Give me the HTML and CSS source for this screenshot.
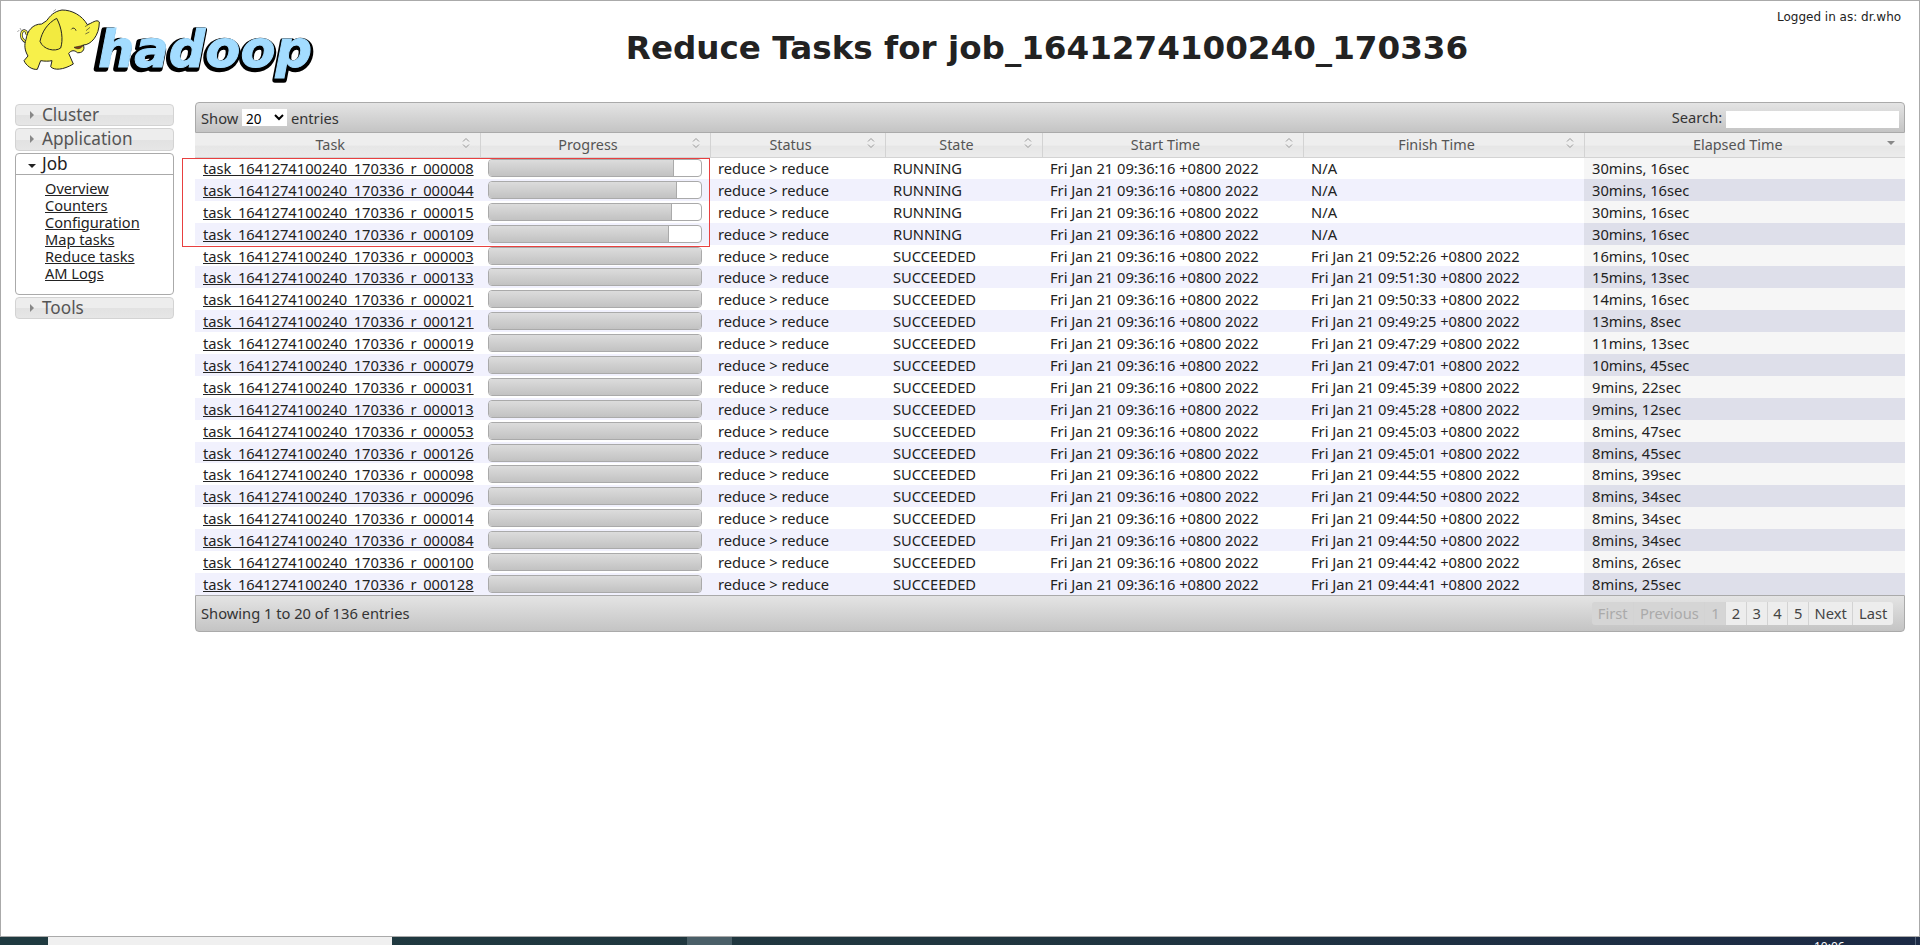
FILE: index.html
```html
<!DOCTYPE html>
<html lang="en">
<head>
	<meta charset="UTF-8">
	<title>Reduce Tasks for job_1641274100240_170336</title>
	<link rel="stylesheet" href="styles.css">
</head>
<body>
	<div class="page">
		<div class="header">
			<svg class="logo" viewBox="0 0 1020 300" width="340" height="100">
				<!-- wordmark -->
				<text class="logo-shadow" x="284" y="207" textLength="654" lengthAdjust="spacingAndGlyphs">hadoop</text>
				<text class="logo-word" x="294" y="202" textLength="642" lengthAdjust="spacingAndGlyphs">hadoop</text>
				<!-- tail -->
				<path d="M82,128 C66,122 60,108 66,96 C72,88 84,94 78,104" fill="none" stroke="#222" stroke-width="8"/>
				<path d="M82,128 C66,122 60,108 66,96 C72,88 84,94 78,104" fill="none" stroke="#f7f04a" stroke-width="4"/>
				<path d="M52,96 L58,90 M60,84 L64,92" stroke="#777" stroke-width="2"/>
				<!-- body -->
				<path d="M125,72 C98,72 82,92 78,118 C72,135 74,152 84,168 L72,182 C78,196 95,210 112,208 L122,182 C135,184 146,184 156,182 L152,200 C162,212 190,210 220,192 L206,160 C214,150 224,150 232,158 C246,160 256,150 250,135 C272,135 298,108 298,66 C290,56 276,70 262,74 C246,46 216,30 186,30 C162,34 150,48 140,62 Z" fill="#f7f04a" stroke="#222" stroke-width="3"/>
				<!-- ear -->
				<path d="M170,55 C142,70 126,95 120,124 C130,150 166,156 182,144 C190,120 186,84 170,55 Z" fill="#f2ea40" stroke="#222" stroke-width="3"/>
				<!-- face -->
				<path d="M214,88 C218,82 226,84 228,92" fill="none" stroke="#222" stroke-width="3"/>
				<path d="M222,142 C232,150 244,146 250,135 C238,140 228,140 222,142 Z" fill="#8a3a10" stroke="#222" stroke-width="2"/>
				<path d="M255,80 L268,72 M258,92 L270,82 M256,102 L268,96" stroke="#333" stroke-width="2"/>
				<path d="M160,34 L168,28" stroke="#777" stroke-width="2"/>
			</svg>
			<h1 class="title">Reduce Tasks for job_1641274100240_170336</h1>
			<div class="user">Logged in as: dr.who</div>
		</div>

		<div class="main">
			<div class="nav">
				<div class="nav-head"><span class="arrow-right"></span>Cluster</div>
				<div class="nav-head"><span class="arrow-right"></span>Application</div>
				<div class="nav-open">
					<div class="nav-head-open"><span class="arrow-down"></span>Job</div>
					<ul class="nav-links">
						<li><a href="#">Overview</a></li>
						<li><a href="#">Counters</a></li>
						<li><a href="#">Configuration</a></li>
						<li><a href="#">Map tasks</a></li>
						<li><a href="#">Reduce tasks</a></li>
						<li><a href="#">AM Logs</a></li>
					</ul>
				</div>
				<div class="nav-head"><span class="arrow-right"></span>Tools</div>
			</div>

			<div class="grid-wrap">
				<div class="toolbar">
					<label class="show">Show
						<select class="entries"><option>20</option><option>50</option><option>100</option></select>
						entries</label>
					<label class="search">Search: <input type="text" class="search-box"></label>
				</div>
				<table class="tasks">
					<colgroup>
						<col class="c-task"><col class="c-progress"><col class="c-status"><col class="c-state"><col class="c-start"><col class="c-finish"><col class="c-elapsed">
					</colgroup>
					<thead>
						<tr>
							<th><div class="th-in"><span>Task</span><svg class="sort" viewBox="0 0 8 12"><path d="M1 4.5 L4 1.5 L7 4.5 M1 7.5 L4 10.5 L7 7.5"/></svg></div></th>
							<th><div class="th-in"><span>Progress</span><svg class="sort" viewBox="0 0 8 12"><path d="M1 4.5 L4 1.5 L7 4.5 M1 7.5 L4 10.5 L7 7.5"/></svg></div></th>
							<th><div class="th-in"><span>Status</span><svg class="sort" viewBox="0 0 8 12"><path d="M1 4.5 L4 1.5 L7 4.5 M1 7.5 L4 10.5 L7 7.5"/></svg></div></th>
							<th><div class="th-in"><span>State</span><svg class="sort" viewBox="0 0 8 12"><path d="M1 4.5 L4 1.5 L7 4.5 M1 7.5 L4 10.5 L7 7.5"/></svg></div></th>
							<th><div class="th-in"><span>Start Time</span><svg class="sort" viewBox="0 0 8 12"><path d="M1 4.5 L4 1.5 L7 4.5 M1 7.5 L4 10.5 L7 7.5"/></svg></div></th>
							<th><div class="th-in"><span>Finish Time</span><svg class="sort" viewBox="0 0 8 12"><path d="M1 4.5 L4 1.5 L7 4.5 M1 7.5 L4 10.5 L7 7.5"/></svg></div></th>
							<th><div class="th-in"><span>Elapsed Time</span><i class="sort-desc"></i></div></th>
						</tr>
					</thead>
					<tbody id="rows"></tbody>
				</table>
				<div class="red-box"></div>
				<div class="footer">
					<span>Showing 1 to 20 of 136 entries</span>
					<div class="pager">
						<a class="off">First</a><a class="off">Previous</a><a class="off">1</a><a>2</a><a>3</a><a>4</a><a>5</a><a>Next</a><a>Last</a>
					</div>
				</div>
			</div>
		</div>
	</div>
	<div class="taskbar">
		<div class="tb-tab"></div>
		<div class="tb-active"></div>
		<div class="tb-clock">10:06</div>
		<div class="tb-desk"></div>
	</div>

	<script type="text/javascript">
	var data=[
		["000008",87.4,"","30mins, 16sec"],
		["000044",88.9,"","30mins, 16sec"],
		["000015",86.1,"","30mins, 16sec"],
		["000109",85,"","30mins, 16sec"],
		["000003",100,"09:52:26","16mins, 10sec"],
		["000133",100,"09:51:30","15mins, 13sec"],
		["000021",100,"09:50:33","14mins, 16sec"],
		["000121",100,"09:49:25","13mins, 8sec"],
		["000019",100,"09:47:29","11mins, 13sec"],
		["000079",100,"09:47:01","10mins, 45sec"],
		["000031",100,"09:45:39","9mins, 22sec"],
		["000013",100,"09:45:28","9mins, 12sec"],
		["000053",100,"09:45:03","8mins, 47sec"],
		["000126",100,"09:45:01","8mins, 45sec"],
		["000098",100,"09:44:55","8mins, 39sec"],
		["000096",100,"09:44:50","8mins, 34sec"],
		["000014",100,"09:44:50","8mins, 34sec"],
		["000084",100,"09:44:50","8mins, 34sec"],
		["000100",100,"09:44:42","8mins, 26sec"],
		["000128",100,"09:44:41","8mins, 25sec"]
	];
	var html="";
	for(var i=0;i<data.length;i++){
		var d=data[i];
		var running=d[2]=="";
		html+='<tr class="'+(i%2?"even":"odd")+'">'
			+'<td><a href="#">task_1641274100240_170336_r_'+d[0]+'</a></td>'
			+'<td><div class="bar"><div class="'+(running?"fill fill-part":"fill")+'" style="width:'+d[1]+'%"></div></div></td>'
			+'<td>reduce &gt; reduce</td>'
			+'<td>'+(running?"RUNNING":"SUCCEEDED")+'</td>'
			+'<td>Fri Jan 21 09:36:16 +0800 2022</td>'
			+'<td>'+(running?"N/A":"Fri Jan 21 "+d[2]+" +0800 2022")+'</td>'
			+'<td class="sorted">'+d[3]+'</td></tr>';
	}
	document.getElementById("rows").innerHTML=html;
	</script>
</body>
</html>
```

FILE: styles.css
```css
html,body{
	margin: 0;
	height: 100%;
	overflow: hidden;
	background: #fff;
}
body{
	font-family: "Noto Sans", "Open Sans", sans-serif;
	font-size: 14.7px;
	color: #222;
}
.page{
	height: 937px;
	box-sizing: border-box;
	border: 1px solid #aaa;
}
.header{
	display: flex;
	height: 101px;
}
.logo{
	flex: none;
	margin-left: -1px;
	margin-top: -1px;
}
.logo-word,.logo-shadow{
	font-family: "DejaVu Sans", sans-serif;
	font-weight: bold;
	font-style: italic;
	font-size: 156px;
}
.logo-word{
	fill: #a3dcff;
	stroke: #a3dcff;
	stroke-width: 3;
}
.logo-shadow{
	fill: #000;
	stroke: #000;
	stroke-width: 16;
	stroke-linejoin: round;
}
.title{
	flex: 1;
	margin: 25px 0 0 -23px;
	text-align: center;
	font-family: "DejaVu Sans", sans-serif;
	font-size: 32.6px;
	line-height: 44px;
	color: #222;
}
.user{
	flex: none;
	width: 142px;
	padding-top: 8px;
	font-size: 12px;
	font-family: "DejaVu Sans", sans-serif;
	line-height: 16px;
}
.main{
	display: flex;
	align-items: flex-start;
	padding-left: 14px;
}
.nav{
	flex: none;
	width: 159px;
	margin-top: 2px;
	display: flex;
	flex-direction: column;
	gap: 2px;
	color: #555;
	font-size: 17.2px;
}
.nav-head{
	height: 22.4px;
	line-height: 20px;
	box-sizing: border-box;
	border: 1px solid #d3d3d3;
	border-radius: 4px;
	background: linear-gradient(#ededed 0%, #ededed 50%, #e2e2e2 52%, #e6e6e6 100%);
	padding-left: 14px;
}
.nav-open{
	height: 142px;
	box-sizing: border-box;
	border: 1px solid #aaa;
	border-radius: 4px;
	background: #fff;
	color: #222;
}
.nav-head-open{
	height: 20px;
	line-height: 19px;
	border-bottom: 1px solid #aaa;
	padding-left: 14px;
}
.arrow-right,.arrow-down{
	display: inline-block;
	width: 0;
	height: 0;
	margin-right: 8px;
	vertical-align: 2px;
}
.arrow-right{
	border-left: 4px solid #888;
	border-top: 4px solid transparent;
	border-bottom: 4px solid transparent;
}
.arrow-down{
	border-top: 4px solid #222;
	border-left: 4px solid transparent;
	border-right: 4px solid transparent;
	margin-left: -2px;
	margin-right: 6px;
}
.nav-links{
	list-style: none;
	margin: 5px 0 0 29px;
	padding: 0;
	font-size: 14.6px;
	line-height: 17px;
}
.nav-links a{
	color: #222;
}
.grid-wrap{
	flex: none;
	width: 1710px;
	margin-left: 21px;
	position: relative;
}
.toolbar{
	height: 31px;
	box-sizing: border-box;
	display: flex;
	justify-content: space-between;
	align-items: center;
	padding: 0 5px;
	border: 1px solid #aaa;
	border-radius: 4px 4px 0 0;
	background: linear-gradient(#e4e4e4, #c4c4c4);
	color: #333;
}
.entries{
	border: 0;
	background: #fff;
	width: 45px;
	height: 17px;
	font: inherit;
	font-size: 13.5px;
	margin: 0;
	padding: 0;
}
.search-box{
	border: 0;
	background: #fff;
	width: 173px;
	height: 17px;
	padding: 0;
	vertical-align: middle;
}
.tasks{
	width: 1710px;
	table-layout: fixed;
	border-collapse: collapse;
}
.c-task{width: 285px;}
.c-progress{width: 230px;}
.c-status{width: 175px;}
.c-state{width: 157px;}
.c-start{width: 261px;}
.c-finish{width: 281px;}
.c-elapsed{width: 321px;}
.tasks th{
	height: 23.5px;
	padding: 0;
	font-weight: normal;
	font-size: 14.4px;
	color: #555;
	background: linear-gradient(#eee 0%, #eee 50%, #e6e6e6 55%, #ebebeb 100%);
	border-right: 1px solid #d3d3d3;
	border-bottom: 1px solid #d3d3d3;
}
.tasks th:last-child{
	border-right: 0;
}
.th-in{
	display: flex;
	align-items: center;
	padding-right: 10px;
}
.th-in span{
	flex: 1;
	text-align: center;
	padding-left: 4px;
}
.sort{
	width: 8px;
	height: 12px;
	margin-top: -3px;
	fill: none;
	stroke: #999;
	stroke-width: 1;
}
.sort-desc{
	width: 0;
	height: 0;
	margin-top: -3px;
	border-top: 4px solid #888;
	border-left: 4px solid transparent;
	border-right: 4px solid transparent;
}
.tasks td{
	height: 21.9px;
	padding: 0 8px;
	box-sizing: border-box;
	line-height: 18px;
	white-space: nowrap;
	overflow: hidden;
}
.tasks a{
	color: #222;
}
.odd{
	background: #fff;
}
.even{
	background: #f1f1fd;
}
.odd .sorted{
	background: #f6f6f6;
}
.even .sorted{
	background: #dedfea;
}
.bar{
	height: 18px;
	box-sizing: border-box;
	border: 1px solid #aaa;
	border-radius: 4px;
	background: #fff;
	overflow: hidden;
}
.fill{
	height: 100%;
	box-sizing: border-box;
	background: linear-gradient(#dcdcdc, #c2c2c2);
}
.fill-part{
	border-right: 1px solid #aaa;
}
.red-box{
	position: absolute;
	left: -13px;
	top: 56px;
	width: 526px;
	height: 87px;
	border: 1px solid #e84040;
}
.footer{
	height: 37px;
	box-sizing: border-box;
	display: flex;
	justify-content: space-between;
	align-items: center;
	padding: 0 11px 0 5px;
	border: 1px solid #aaa;
	border-radius: 0 0 4px 4px;
	background: linear-gradient(#e4e4e4, #c4c4c4);
	color: #333;
}
.pager{
	display: flex;
}
.pager a{
	height: 23px;
	line-height: 22px;
	padding: 0 5.65px;
	border-right: 1px solid #d3d3d3;
	background: #ededed;
	color: #444;
}
.pager a:last-child{
	border-right: 0;
	border-radius: 0 3px 3px 0;
}
.pager a.off{
	background: #d5d5d5;
	color: #aaa;
}
.pager a:first-child{
	border-radius: 3px 0 0 3px;
}
.taskbar{
	height: 8px;
	position: relative;
	overflow: hidden;
	background: linear-gradient(90deg, #1f3a40, #20363f 50%, #1c2a45);
}
.tb-tab{
	position: absolute;
	left: 48px;
	top: 0;
	width: 344px;
	height: 8px;
	background: #f0f0f0;
}
.tb-active{
	position: absolute;
	left: 687px;
	top: 0;
	width: 45px;
	height: 8px;
	background: #4a5f68;
}
.tb-clock{
	position: absolute;
	left: 1814px;
	top: 3px;
	color: #fff;
	font-size: 12px;
	line-height: 14px;
}
.tb-desk{
	position: absolute;
	left: 1915px;
	top: 0;
	width: 1px;
	height: 8px;
	background: #55657a;
}
```
